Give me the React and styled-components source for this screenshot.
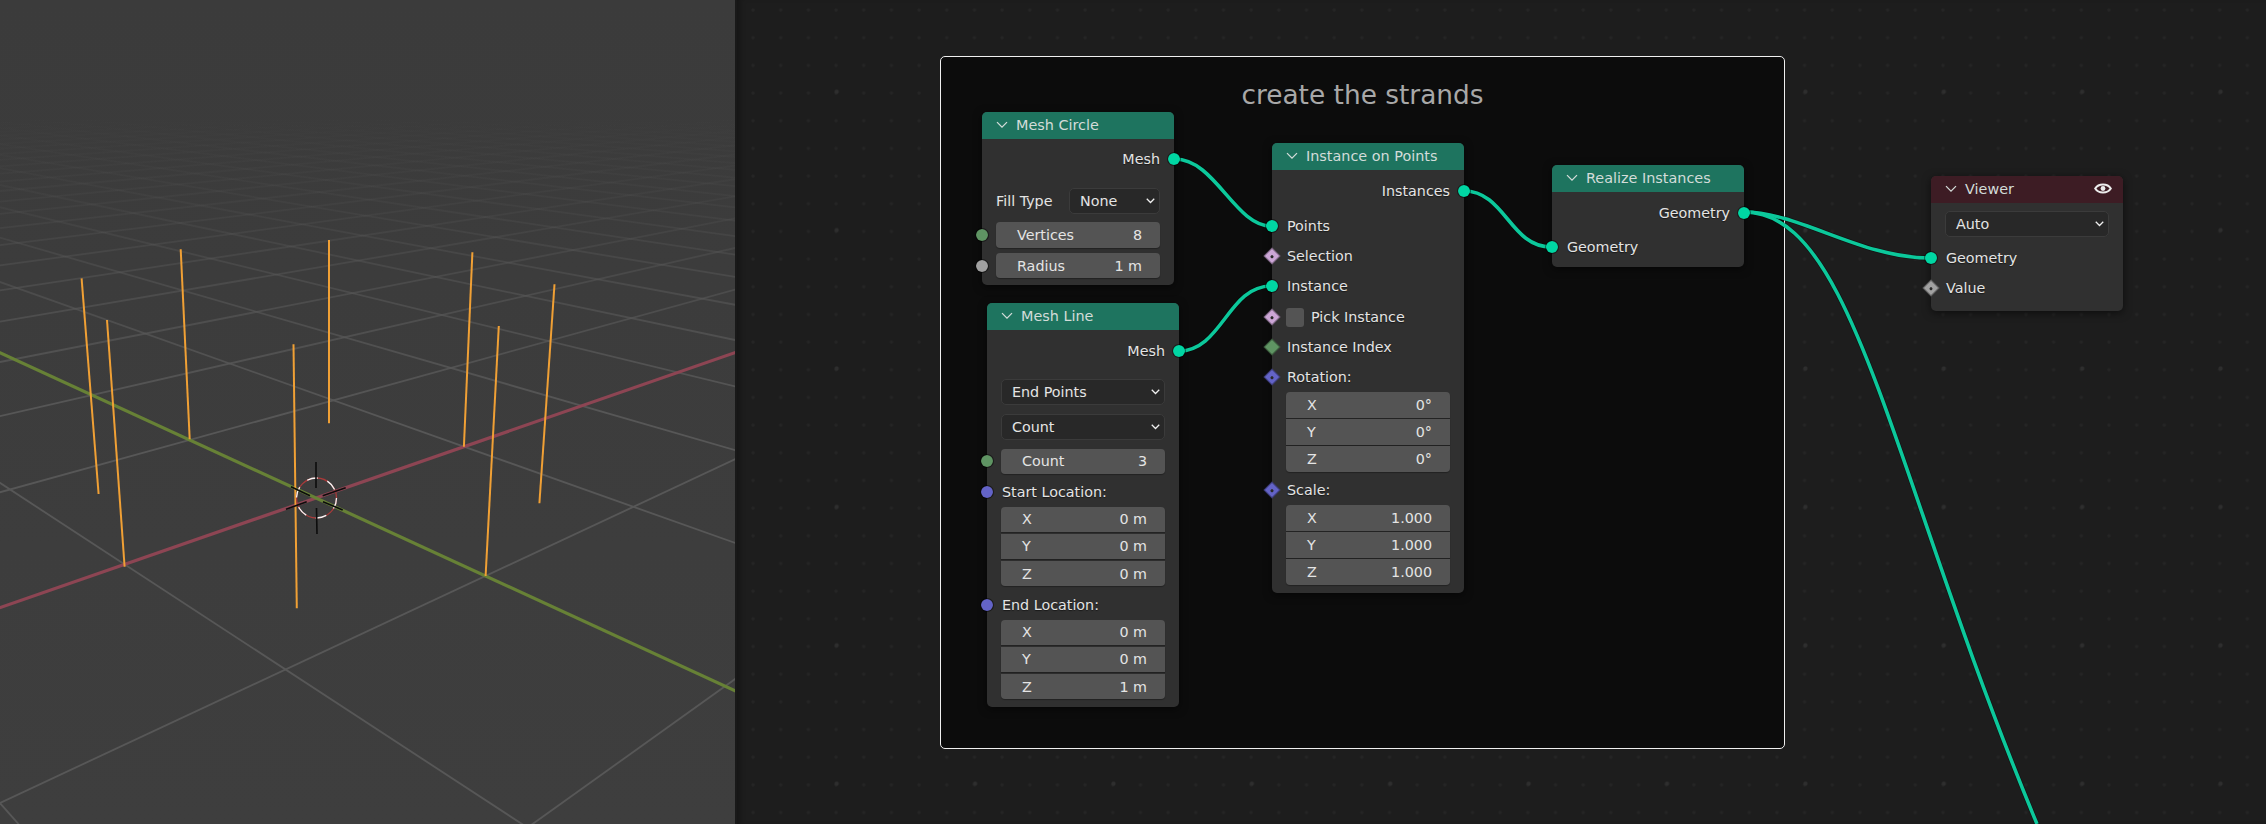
import React from 'react'
import styled, { createGlobalStyle } from 'styled-components'

const GEOMETRY = '#00d6a3'
const INT = '#5f9463'
const FLOAT = '#a1a1a1'
const VECTOR = '#6363c7'
const BOOL = '#cca6d6'

const EDITOR_X = 737

const GlobalStyle = createGlobalStyle`
  html, body {
    margin: 0;
    padding: 0;
    background: #1d1d1d;
    overflow: hidden;
  }
`

const Page = styled.div`
  display: flex;
  width: 2266px;
  height: 824px;
  overflow: hidden;
  font-family: "DejaVu Sans", "Liberation Sans", sans-serif;
  font-size: 14.3px;
  color: #e4e4e4;
`

const Viewport = styled.div`
  flex: 0 0 735px;
  height: 824px;
  background: linear-gradient(#3b3b3b, #3e3e3e);
  overflow: hidden;

  svg {
    display: block;
  }
`

const Divider = styled.div`
  flex: 0 0 2px;
  background: #191919;
`

const Editor = styled.div`
  position: relative;
  flex: 1;
  height: 824px;
  overflow: hidden;
  background-color: #1d1d1d;
  background-image:
    radial-gradient(circle at center, #2e2e2e 0, #2e2e2e 1.5px, transparent 2.6px),
    radial-gradient(circle at center, #252525 0, #252525 1px, transparent 2.2px);
  background-size: 138.4px 138.4px, 27.68px 27.68px;
  background-position: 30.5px 22.5px, 2.2px -3.8px;
  box-shadow: inset 6px 0 6px -4px rgba(0, 0, 0, 0.35);
`

const Frame = styled.div`
  position: absolute;
  left: ${940 - EDITOR_X}px;
  top: 56px;
  width: 845px;
  height: 693px;
  box-sizing: border-box;
  border: 1px solid #f0f0f0;
  border-radius: 5px;
  background: #0c0c0c;
  text-align: center;
`

const FrameTitle = styled.div`
  margin-top: 21px;
  font-size: 26.4px;
  line-height: 34px;
  color: #a8a8a8;
`

const Wires = styled.svg`
  position: absolute;
  left: 0;
  top: 0;
`

const Node = styled.div`
  position: absolute;
  left: ${p => p.$x - EDITOR_X}px;
  top: ${p => p.$y}px;
  width: ${p => p.$w || 192}px;
  height: ${p => p.$h}px;
  border-radius: 5px;
  background: #303030;
  box-shadow: 0 2px 9px rgba(0, 0, 0, 0.55);
`

const Header = styled.div`
  display: flex;
  align-items: center;
  box-sizing: border-box;
  height: 27px;
  padding: 0 0 2px 14px;
  gap: 8px;
  border-radius: 5px 5px 0 0;
  background: ${p => p.$color || '#1e745f'};
  color: #d3dcd9;
  font-size: 14.4px;
  white-space: nowrap;
`

const HeaderTitle = styled.span`
  flex: 1;
`

const EyeIcon = styled.svg`
  margin-right: 11px;
`

const Body = styled.div`
  display: flex;
  flex-direction: column;
  padding: 0 14px;
`

const Row = styled.div`
  position: relative;
  display: flex;
  align-items: center;
  height: 30px;
  margin-top: ${p => p.$mt || 0}px;
  justify-content: ${p => (p.$out ? 'flex-end' : 'flex-start')};
  padding-left: ${p => (p.$out ? 0 : 1)}px;
  white-space: nowrap;
  text-shadow: 0 1px 1px rgba(0, 0, 0, 0.5);
`

const SelectRow = styled.div`
  display: flex;
  align-items: center;
  justify-content: space-between;
  margin-top: ${p => p.$mt || 0}px;
`

const Select = styled.div`
  display: flex;
  flex: ${p => (p.$fixed ? '0 0 91px' : '1')};
  align-items: center;
  justify-content: space-between;
  box-sizing: border-box;
  height: 26px;
  padding: 0 4px 0 10px;
  border: 1px solid #3b3b3b;
  border-radius: 5px;
  background: #282828;
`

const FieldWrap = styled.div`
  position: relative;
  margin-top: ${p => p.$mt || 0}px;
`

const Field = styled.div`
  display: flex;
  align-items: center;
  justify-content: space-between;
  height: ${p => p.$h || 25}px;
  padding: 0 18px 0 21px;
  border-radius: ${p => p.$radius || '4px'};
  background: #545454;
  box-shadow: 0 1px 1px rgba(0, 0, 0, 0.3);
`

const Group = styled.div`
  display: grid;
  grid-template-rows: repeat(3, 1fr);
  gap: 1.5px;
  height: 80px;
`

const Check = styled.span`
  width: 18px;
  height: 19px;
  margin: 0 7px 0 -1px;
  border-radius: 3px;
  background: #545454;
`

const Dot = styled.span`
  position: absolute;
  top: 50%;
  ${p => (p.$out ? 'right: -14px;' : 'left: -14px;')}
  width: 14px;
  height: 14px;
  box-sizing: border-box;
  border: 1px solid rgba(0, 0, 0, 0.45);
  border-radius: 50%;
  background: ${p => p.$color};
  background-clip: padding-box;
  transform: translate(${p => (p.$out ? '50%' : '-50%')}, -50%);
`

const Diamond = styled.span`
  position: absolute;
  top: 50%;
  left: -14px;
  display: flex;
  align-items: center;
  justify-content: center;
  width: 10px;
  height: 10px;
  background: ${p => p.$color};
  border: 1px solid rgba(0, 0, 0, 0.4);
  transform: translate(-50%, -50%) rotate(45deg);

  &::after {
    content: '';
    display: ${p => (p.$hollow ? 'block' : 'none')};
    width: 3px;
    height: 3px;
    border-radius: 50%;
    background: #2a2a2a;
  }
`

const Chevron = ({ size = 12, width = 1.3, color = '#d3dcd9' }) => (
  <svg width={size} height={size * 0.6} viewBox="0 0 12 7" fill="none">
    <path d="M1 1 L6 6 L11 1" stroke={color} strokeWidth={width} />
  </svg>
)

const DropChevron = () => <Chevron size={9} width={1.7} color="#f0f0f0" />

const Eye = () => (
  <EyeIcon width="18" height="13" viewBox="0 0 18 13" fill="none">
    <path d="M1.2 6.5 C4.5 1.2 13.5 1.2 16.8 6.5 C13.5 11.8 4.5 11.8 1.2 6.5 Z" stroke="#ececec" strokeWidth="2" />
    <circle cx="9" cy="6.5" r="2.4" fill="#ececec" />
  </EyeIcon>
)

const NodeHeader = ({ title, color, eye }) => (
  <Header $color={color}>
    <Chevron />
    <HeaderTitle>{title}</HeaderTitle>
    {eye && <Eye />}
  </Header>
)

const Vec3 = ({ values }) => (
  <Group>
    {['X', 'Y', 'Z'].map((axis, i) => (
      <Field key={axis} $h="auto" $radius={i === 0 ? '4px 4px 0 0' : i === 2 ? '0 0 4px 4px' : '0'}>
        <span>{axis}</span>
        <span>{values[i]}</span>
      </Field>
    ))}
  </Group>
)

const project = (u, v) => {
  const w = 1 + 0.1279 * u - 0.1463 * v
  return [(316 + 207.3 * u + 98.5 * v) / w, (498 + 5.8 * u - 6.3 * v) / w]
}

const clipLine = (from, to) => {
  // keep the part of a ground line that lies in front of the camera
  const w = (u, v) => 1 + 0.1279 * u - 0.1463 * v
  let [a, b] = [from, to]
  const wa = w(a[0], a[1])
  const wb = w(b[0], b[1])
  const min = 0.045
  if (wa < min && wb < min) return null
  if (wa < min) {
    const t = (min - wa) / (wb - wa)
    a = [a[0] + (b[0] - a[0]) * t, a[1] + (b[1] - a[1]) * t]
  } else if (wb < min) {
    const t = (min - wb) / (wa - wb)
    b = [b[0] + (a[0] - b[0]) * t, b[1] + (a[1] - b[1]) * t]
  }
  return [project(a[0], a[1]), project(b[0], b[1])]
}

const gridLines = () => {
  const lines = []
  for (let i = -70; i <= 70; i++) {
    if (i !== 0) {
      const a = clipLine([i, -70], [i, 70])
      const b = clipLine([-70, i], [70, i])
      if (a) lines.push(a)
      if (b) lines.push(b)
    }
  }
  return lines
}

const strands = [
  [81.6, 278.3, 98.6, 494],
  [107, 320, 124.6, 566.7],
  [180.7, 249.3, 189.7, 439.3],
  [293.5, 344.3, 296.8, 608.3],
  [329, 240, 329, 423.3],
  [472.4, 252.3, 463.9, 446.7],
  [498.8, 326, 485.6, 576],
  [554.5, 284.3, 539.4, 503.3],
]

const cursorTicks = [
  [316, 462, 316, 488],
  [316.5, 508, 317, 534],
  [291, 486.7, 310, 495.7],
  [323, 501.7, 342.7, 510],
  [322.7, 495.7, 345.7, 487.7],
  [286, 509.3, 306.7, 501.7],
]

const Scene = () => {
  const redA = project(-5, 0)
  const redB = project(5, 0)
  const greenA = project(0, -5)
  const greenB = project(0, 5)
  return (
    <svg width="735" height="824" viewBox="0 0 735 824">
      <defs>
        <linearGradient id="gridFade" gradientUnits="userSpaceOnUse" x1="0" y1="118" x2="0" y2="420">
          <stop offset="0" stopColor="#575757" stopOpacity="0" />
          <stop offset="0.3" stopColor="#575757" stopOpacity="0.2" />
          <stop offset="0.55" stopColor="#575757" stopOpacity="0.55" />
          <stop offset="1" stopColor="#575757" stopOpacity="1" />
        </linearGradient>
      </defs>
      {gridLines().map(([a, b], i) => (
        <line key={i} x1={a[0]} y1={a[1]} x2={b[0]} y2={b[1]} stroke="url(#gridFade)" strokeWidth="1.8" />
      ))}
      <line x1={redA[0]} y1={redA[1]} x2={redB[0]} y2={redB[1]} stroke="#8d4553" strokeWidth="3.2" />
      <line x1={greenA[0]} y1={greenA[1]} x2={greenB[0]} y2={greenB[1]} stroke="#678136" strokeWidth="3.2" />
      {strands.map((s, i) => (
        <line key={i} x1={s[0]} y1={s[1]} x2={s[2]} y2={s[3]} stroke="#f0a035" strokeWidth="2" />
      ))}
      <circle cx="316.5" cy="498" r="20" fill="none" stroke="#a83a3a" strokeWidth="1.3" />
      <circle cx="316.5" cy="498" r="20" fill="none" stroke="#f4f4f4" strokeWidth="1.3" strokeDasharray="11 10" />
      {cursorTicks.map((s, i) => (
        <line key={i} x1={s[0]} y1={s[1]} x2={s[2]} y2={s[3]} stroke="#0c0c0c" strokeWidth="1.6" />
      ))}
    </svg>
  )
}

const wire = (x1, y1, c1, c2, cy, x2, y2) => `M${x1 - EDITOR_X} ${y1} C${c1 - EDITOR_X} ${y1} ${c2 - EDITOR_X} ${cy} ${x2 - EDITOR_X} ${y2}`

const wirePaths = [
  wire(1175, 159, 1215, 1235, 226, 1271, 226),
  wire(1179, 351, 1222, 1228, 286, 1271, 286),
  wire(1464, 191, 1505, 1510, 247, 1551, 247),
  wire(1744, 212, 1800, 1860, 258, 1930, 258),
  wire(1744, 212, 1855, 1890, 470, 2037, 824),
]

const NodeWires = () => (
  <Wires width="1529" height="824" fill="none">
    {wirePaths.map((d, i) => (
      <path key={`s${i}`} d={d} stroke="rgba(0,0,0,0.35)" strokeWidth="5" />
    ))}
    {wirePaths.map((d, i) => (
      <path key={i} d={d} stroke="#0cc89b" strokeWidth="3.6" />
    ))}
  </Wires>
)

const App = () => (
  <Page>
    <GlobalStyle />
    <Viewport>
      <Scene />
    </Viewport>
    <Divider />
    <Editor>
      <Frame>
        <FrameTitle>create the strands</FrameTitle>
      </Frame>
      <NodeWires />

      <Node $x={982} $y={112} $h={173}>
        <NodeHeader title="Mesh Circle" />
        <Body>
          <Row $out $mt={5}>
            Mesh
            <Dot $out $color={GEOMETRY} />
          </Row>
          <SelectRow $mt={14}>
            <span>Fill Type</span>
            <Select $fixed>
              None
              <DropChevron />
            </Select>
          </SelectRow>
          <FieldWrap $mt={8}>
            <Dot $color={INT} />
            <Field $h={26}>
              <span>Vertices</span>
              <span>8</span>
            </Field>
          </FieldWrap>
          <FieldWrap $mt={5}>
            <Dot $color={FLOAT} />
            <Field>
              <span>Radius</span>
              <span>1 m</span>
            </Field>
          </FieldWrap>
        </Body>
      </Node>

      <Node $x={987} $y={303} $h={404}>
        <NodeHeader title="Mesh Line" />
        <Body>
          <Row $out $mt={6}>
            Mesh
            <Dot $out $color={GEOMETRY} />
          </Row>
          <SelectRow $mt={13}>
            <Select>
              End Points
              <DropChevron />
            </Select>
          </SelectRow>
          <SelectRow $mt={9}>
            <Select>
              Count
              <DropChevron />
            </Select>
          </SelectRow>
          <FieldWrap $mt={8.5}>
            <Dot $color={INT} />
            <Field>
              <span>Count</span>
              <span>3</span>
            </Field>
          </FieldWrap>
          <Row $mt={3}>
            <Dot $color={VECTOR} />
            Start Location:
          </Row>
          <Vec3 values={['0 m', '0 m', '0 m']} />
          <Row $mt={3}>
            <Dot $color={VECTOR} />
            End Location:
          </Row>
          <Vec3 values={['0 m', '0 m', '1 m']} />
        </Body>
      </Node>

      <Node $x={1272} $y={143} $h={450}>
        <NodeHeader title="Instance on Points" />
        <Body>
          <Row $out $mt={6}>
            Instances
            <Dot $out $color={GEOMETRY} />
          </Row>
          <Row $mt={5}>
            <Dot $color={GEOMETRY} />
            Points
          </Row>
          <Row>
            <Diamond $color={BOOL} $hollow />
            Selection
          </Row>
          <Row>
            <Dot $color={GEOMETRY} />
            Instance
          </Row>
          <Row $mt={1}>
            <Diamond $color={BOOL} $hollow />
            <Check />
            Pick Instance
          </Row>
          <Row>
            <Diamond $color={INT} />
            Instance Index
          </Row>
          <Row>
            <Diamond $color={VECTOR} $hollow />
            Rotation:
          </Row>
          <Vec3 values={['0°', '0°', '0°']} />
          <Row $mt={3}>
            <Diamond $color={VECTOR} $hollow />
            Scale:
          </Row>
          <Vec3 values={['1.000', '1.000', '1.000']} />
        </Body>
      </Node>

      <Node $x={1552} $y={165} $h={102}>
        <NodeHeader title="Realize Instances" />
        <Body>
          <Row $out $mt={5.5}>
            Geometry
            <Dot $out $color={GEOMETRY} />
          </Row>
          <Row $mt={4.5}>
            <Dot $color={GEOMETRY} />
            Geometry
          </Row>
        </Body>
      </Node>

      <Node $x={1931} $y={176} $h={135}>
        <NodeHeader title="Viewer" color="#3d1c24" eye />
        <Body>
          <SelectRow $mt={8}>
            <Select>
              Auto
              <DropChevron />
            </Select>
          </SelectRow>
          <Row $mt={6}>
            <Dot $color={GEOMETRY} />
            Geometry
          </Row>
          <Row>
            <Diamond $color={FLOAT} $hollow />
            Value
          </Row>
        </Body>
      </Node>
    </Editor>
  </Page>
)

export default App
